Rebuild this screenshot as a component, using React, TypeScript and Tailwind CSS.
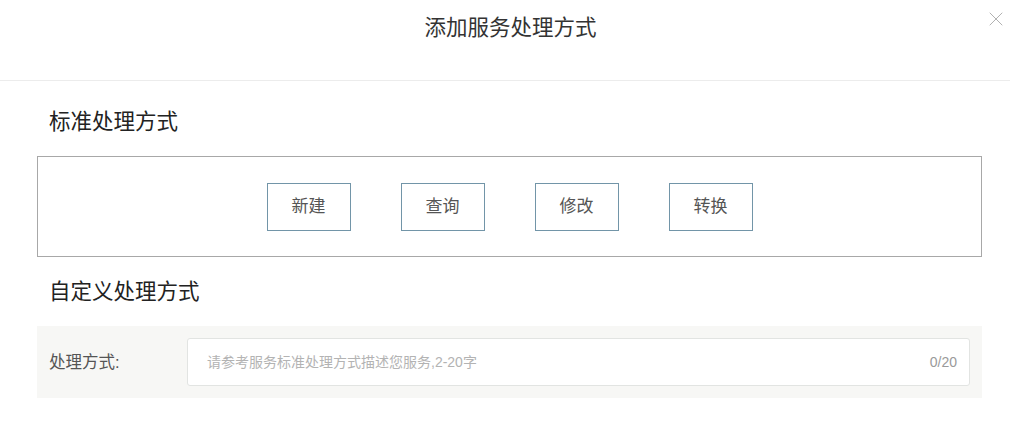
import { X } from 'lucide-react'

const standardMethods = ['新建', '查询', '修改', '转换']

export default function App() {
  return (
    <div className="h-[421px] w-[1010px] bg-white font-['Liberation_Sans','Noto_Sans_CJK_SC',sans-serif] text-[#333]">
      <header className="relative h-[81px] border-b border-[#ececec] pt-[14px] pl-[11px] text-center">
        <h1 className="text-[21.5px] leading-[28px] text-[#333]">添加服务处理方式</h1>
        <button type="button" aria-label="关闭" className="absolute right-[2px] top-[7px] text-[#a8a8a8]">
          <X size={24} strokeWidth={0.9} />
        </button>
      </header>

      <div className="pl-[37px] pr-[28px]">
        <h2 className="mt-[27px] mb-[20px] pl-[12px] text-[21.5px] leading-[28px] text-[#222]">标准处理方式</h2>
        <div className="flex h-[101px] items-center justify-center gap-[50px] border border-[#a8a8a8]">
          {standardMethods.map((name) => (
            <button
              key={name}
              type="button"
              className="h-[48px] w-[84px] border border-[#7295a8] text-[17px] text-[#555]"
            >
              {name}
            </button>
          ))}
        </div>

        <h2 className="mt-[21px] mb-[20px] pl-[12px] text-[21.5px] leading-[28px] text-[#222]">自定义处理方式</h2>
        <div className="flex h-[72px] items-center bg-[#f7f7f5] px-[12px]">
          <label htmlFor="custom-method" className="w-[138px] text-[16.5px] text-[#555]">
            处理方式:
          </label>
          <div className="flex h-[48px] flex-1 items-center rounded-[3px] border border-[#e2e4e2] bg-white pl-[19px] pr-[12px]">
            <input
              id="custom-method"
              maxLength={20}
              placeholder="请参考服务标准处理方式描述您服务,2-20字"
              className="flex-1 bg-transparent text-[14px] text-[#555] outline-none placeholder:text-[#b3b3b3]"
            />
            <span className="text-[14px] text-[#9a9a9a]">0/20</span>
          </div>
        </div>
      </div>
    </div>
  )
}
